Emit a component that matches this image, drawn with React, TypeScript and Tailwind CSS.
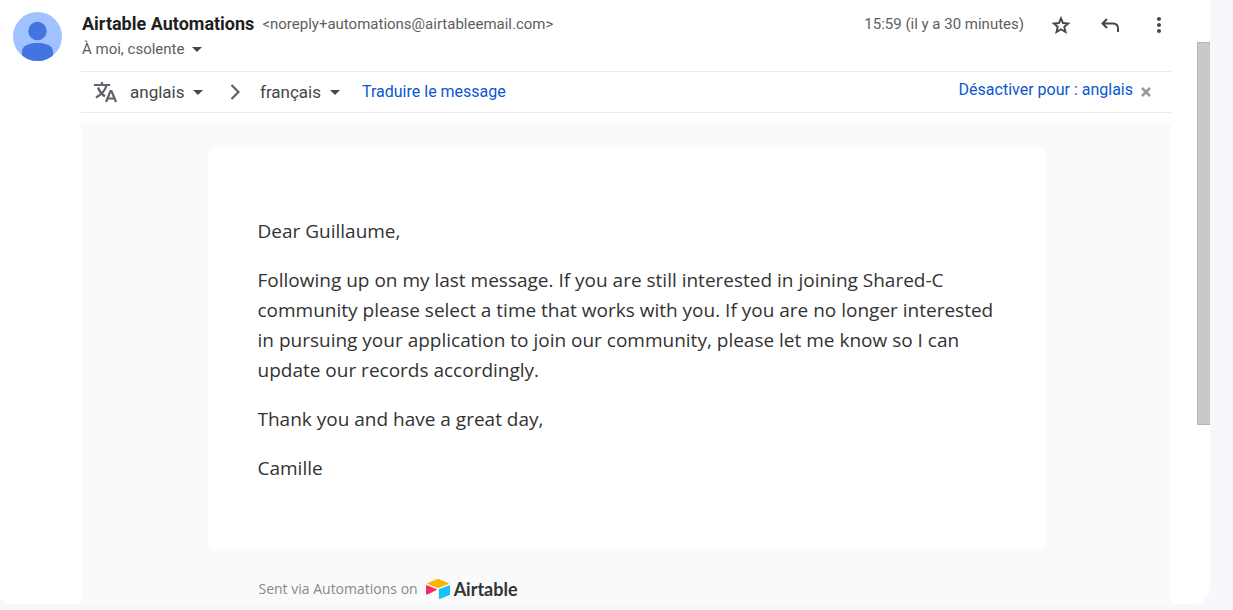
import React from 'react';
import { MdMoreVert } from 'react-icons/md';

interface LanguageSelectProps {
  label: string;
  value: string;
}

const Caret: React.FC = () => (
  <svg className="h-[5px] w-[10px] shrink-0" viewBox="0 0 10 5" aria-hidden="true">
    <path d="M0 0h10L5 5z" fill="#444746" />
  </svg>
);

const Avatar: React.FC = () => (
  <svg className="size-[49px] shrink-0" viewBox="0 0 49 49" role="img" aria-label="Airtable Automations">
    <defs>
      <clipPath id="avatar-clip">
        <circle cx="24.5" cy="24.5" r="24.5" />
      </clipPath>
    </defs>
    <g clipPath="url(#avatar-clip)">
      <rect width="49" height="49" fill="#a0c3ff" />
      <circle cx="24.5" cy="19" r="9.2" fill="#4374e0" />
      <path d="M9 49V40C9 33.500 16 31 24.500 31S40 33.500 40 40V49Z" fill="#4374e0" />
    </g>
  </svg>
);

const TranslateIcon: React.FC = () => (
  <svg className="h-[22px] w-6 shrink-0" viewBox="0 0 24 22" fill="none" stroke="#5f6368" strokeWidth="2.2" aria-hidden="true">
    <path d="M0 4H16M8 1V4M4 6.500C5.500 10.500 8 13.500 11 15.500M12.500 4.500C11 9.500 7.500 13.500 2 16.500" />
    <path d="M12 21L16.500 10H17.500L22 21M13.500 17.500H20.500" />
  </svg>
);

const AirtableMark: React.FC = () => (
  <svg className="h-5 w-6 shrink-0" viewBox="0 0 24 20" aria-hidden="true">
    <path d="M10.800 .3 1.700 4C1.200 4.200 1.200 4.900 1.700 5.100L10.900 8.700C11.600 9 12.400 9 13.100 8.700L22.300 5.100C22.800 4.900 22.800 4.200 22.300 4L13.200 .3C12.400 0 11.600 0 10.800 .3Z" fill="#fcb400" />
    <path d="M12.900 10.700V19.300C12.900 19.800 13.300 20 13.700 19.900L23.500 16.100C23.800 16 24 15.700 24 15.400V6.800C24 6.300 23.600 6.100 23.200 6.200L13.300 10C13 10.100 12.900 10.400 12.900 10.700Z" fill="#18bfff" />
    <path d="M10.500 11.100 1.500 15.500C.9 15.800 0 15.400 0 14.800V6.800C0 6.300 .5 6 1 6.200L10.400 10C11 10.200 11 10.800 10.500 11.100Z" fill="#f82b60" />
  </svg>
);

const LanguageSelect: React.FC<LanguageSelectProps> = ({ label, value }) => (
  <div className="flex items-center gap-2">
    <select aria-label={label} className="appearance-none bg-transparent text-[17px] leading-6 text-[#444746]" defaultValue={value}>
      <option value={value}>{value}</option>
    </select>
    <Caret />
  </div>
);

const MessageHeader: React.FC = () => (
  <header className="flex pt-3 pl-[13px]">
    <Avatar />
    <div className="ml-5 min-w-0 flex-1">
      <div className="flex items-center gap-2">
        <h1 className="text-lg leading-6 font-bold text-[#1f1f1f]">Airtable Automations</h1>
        <span className="text-[15px] leading-6 text-[#5e5e5e]">&lt;noreply+automations@airtableemail.com&gt;</span>
      </div>
      <button type="button" className="mt-px flex items-center gap-2 text-[15px] leading-6 text-[#5e5e5e]">
        À moi, csolente
        <Caret />
      </button>
    </div>
    <div className="flex h-[26px] items-center text-[#444746]">
      <time className="mr-7 self-start text-[15px] leading-6 text-[#5e5e5e]">15:59 (il y a 30 minutes)</time>
      <button type="button" aria-label="Suivre" className="mr-[31px]">
        <svg className="size-[18px]" viewBox="0 0 18 18" fill="none" stroke="currentColor" strokeWidth="1.9" aria-hidden="true">
          <path d="M9 2.300 11 7 16.200 7.500 12.300 10.900 13.500 16 9 13.300 4.500 16 5.700 10.900 1.800 7.500 7 7Z" />
        </svg>
      </button>
      <button type="button" aria-label="Répondre" className="mr-7">
        <svg className="h-[15px] w-[18px]" viewBox="0 0 18 15" fill="none" stroke="currentColor" strokeWidth="2" aria-hidden="true">
          <path d="M6 1 1.500 5.500 6 10M1.500 5.500H12C15 5.500 17 7.500 17 10.500V14" />
        </svg>
      </button>
      <button type="button" aria-label="Plus">
        <MdMoreVert className="size-6" />
      </button>
    </div>
  </header>
);

const TranslateBar: React.FC = () => (
  <div className="mt-[10px] ml-[81px] flex h-[42px] items-center border-y border-[#e8eaed] pr-5 pl-[13px]">
    <TranslateIcon />
    <div className="ml-3">
      <LanguageSelect label="Langue source" value="anglais" />
    </div>
    <svg className="mr-5 ml-[27px] h-4 w-[10px] shrink-0" viewBox="0 0 10 16" fill="none" stroke="#5f6368" strokeWidth="2.2" aria-hidden="true">
      <path d="M1.500 1 8.500 8 1.500 15" />
    </svg>
    <LanguageSelect label="Langue cible" value="français" />
    <a href="#traduire" className="ml-[22px] text-base leading-6 text-[#0b57d0]">Traduire le message</a>
    <div className="ml-auto flex items-center gap-2">
      <a href="#desactiver" className="pb-1 text-base leading-6 text-[#0b57d0]">Désactiver pour : anglais</a>
      <button type="button" aria-label="Fermer">
        <svg className="size-[10px]" viewBox="0 0 10 10" stroke="#999" strokeWidth="2.5" aria-hidden="true">
          <path d="M1 1 9 9M9 1 1 9" />
        </svg>
      </button>
    </div>
  </div>
);

const MessageBody: React.FC = () => (
  <div className="mt-[10px] ml-[81px] bg-[#fafafa] pt-6 pb-[3px] font-['Open_Sans','Noto_Sans',sans-serif]">
    <div className="mx-auto max-w-[837px]">
      <article className="space-y-[19px] rounded-lg bg-white px-[50px] pt-[69px] pb-[68px] text-[19px] leading-[30px] text-[#333]">
        <p>Dear Guillaume,</p>
        <p>
          Following up on my last message. If you are still interested in joining Shared-C community please
          select a time that works with you. If you are no longer interested in pursuing your application to
          join our community, please let me know so I can update our records accordingly.
        </p>
        <p>Thank you and have a great day,</p>
        <p>Camille</p>
      </article>
      <footer className="flex items-center gap-2 pt-[26px] pl-[51px] text-sm leading-6 text-[#898989]">
        Sent via Automations on
        <a href="#airtable" className="flex items-center gap-1 font-['Lato',sans-serif] text-lg leading-6 font-bold text-[#333]">
          <AirtableMark />
          Airtable
        </a>
      </footer>
    </div>
  </div>
);

const App: React.FC = () => (
  <div className="min-h-screen bg-[#f6f8fc] pr-[23px] pb-[6px] font-['Roboto','Liberation_Sans',sans-serif]">
    <div className="flex overflow-hidden rounded-br-2xl rounded-bl-lg bg-white">
      <main className="mr-[26px] min-w-0 flex-1">
        <MessageHeader />
        <TranslateBar />
        <MessageBody />
      </main>
      <div className="w-[13px] shrink-0 pt-[42px]" aria-hidden="true">
        <div className="h-[383px] border border-r-0 border-[#b5b5b5] bg-[#c9c9c9]" />
      </div>
    </div>
  </div>
);

export default App;
